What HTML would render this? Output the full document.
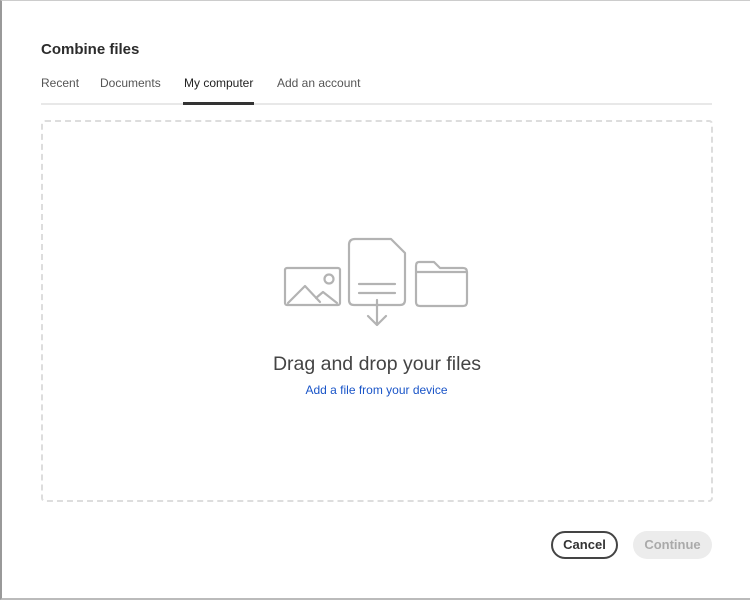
<!DOCTYPE html>
<html><head><style>
body{margin:0;width:750px;height:600px;background:#fff;font-family:"Liberation Sans",sans-serif;position:relative;overflow:hidden}
.frame{position:absolute;left:0;top:0;width:748px;height:597px;border-left:2px solid #999;border-bottom:2px solid #bbb;border-top:1px solid #ccc}
h1{position:absolute;left:41px;top:41px;margin:0;font-size:15px;font-weight:bold;color:#2c2c2c}
.tabs{position:absolute;left:41px;top:76px;font-size:12px;color:#555}
.tabs span{position:absolute;white-space:nowrap}
.line{position:absolute;left:41px;top:103px;width:671px;height:2px;background:#e8e8e8}
.sel{position:absolute;left:183px;top:102px;width:71px;height:3px;background:#333}
.drop{position:absolute;left:41px;top:120px;width:668px;height:378px;border:2px dashed #ddd;border-radius:4px}
.t1{position:absolute;left:2px;width:750px;top:353px;text-align:center;font-size:19.5px;color:#444}
.t2{position:absolute;left:0;width:753px;top:383px;text-align:center;font-size:12px;color:#1a55c8}
.btn{position:absolute;top:531px;height:28px;border-radius:15px;font-size:13px;font-weight:bold;text-align:center;line-height:28px;box-sizing:border-box}
</style></head><body>
<div class="frame"></div>
<h1>Combine files</h1>
<div class="tabs"><span style="left:0">Recent</span><span style="left:59px">Documents</span><span style="left:143px;color:#222">My computer</span><span style="left:236px">Add an account</span></div>
<div class="line"></div><div class="sel"></div>
<div class="drop"></div>
<svg style="position:absolute;left:0;top:0" width="750" height="600" fill="none" stroke="#b3b3b3" stroke-width="2.2" stroke-linejoin="round" stroke-linecap="round">
<rect x="285" y="268" width="55" height="37" rx="2"/>
<path d="M288 303 L305 286 L320 302 M316 298 L323 292 L337 303"/>
<circle cx="329" cy="279" r="4.5"/>
<path d="M355 239 H391 L405 253 V300 Q405 305 400 305 H354 Q349 305 349 300 V245 Q349 239 355 239 Z"/>
<path d="M359 284 H395 M359 293 H395 M377 300 V325 M368 316 L377 325 L386 316"/>
<path d="M419 262 H434 L440 268 H463 Q467 268 467 272 V302 Q467 306 463 306 H420 Q416 306 416 302 V266 Q416 262 419 262 Z M416 272 H467"/>
</svg>
<div class="t1">Drag and drop your files</div>
<div class="t2">Add a file from your device</div>
<div class="btn" style="left:551px;width:67px;border:2px solid #444;color:#333;line-height:24px">Cancel</div>
<div class="btn" style="left:633px;width:79px;background:#ececec;color:#aaa">Continue</div>
</body></html>
